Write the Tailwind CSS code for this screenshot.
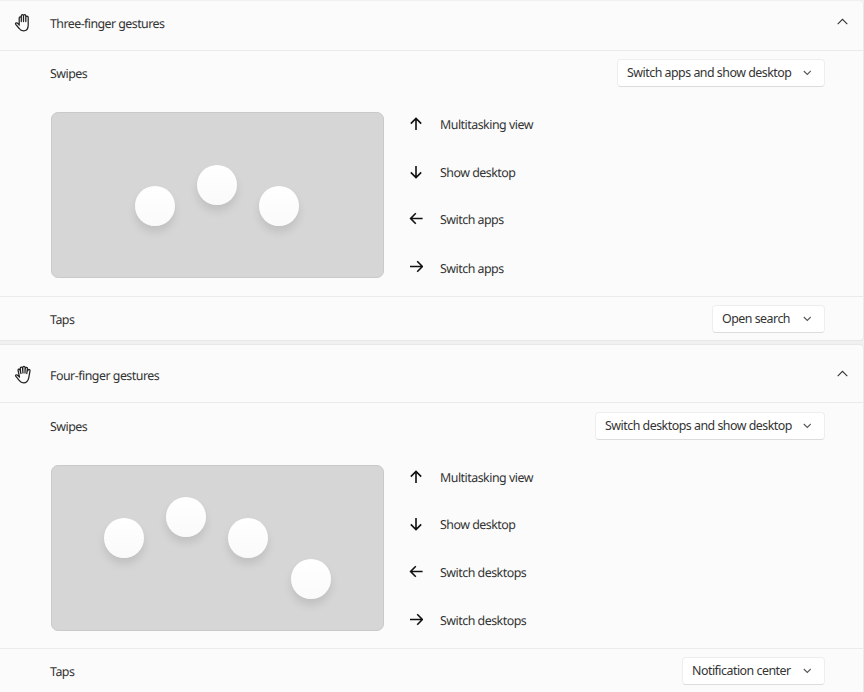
<!DOCTYPE html>
<html lang="en">
<head>
  <meta charset="UTF-8" />
  <meta name="viewport" content="width=device-width, initial-scale=1.0"/>
  <title>Touchpad gestures</title>
  <script src="https://cdn.jsdelivr.net/npm/@tailwindcss/browser@4"></script>
</head>
<body class="bg-[#f0f0f0] font-['Noto_Sans','Open_Sans',sans-serif] text-[12.4px] leading-4 tracking-[-0.5px] text-[#333] h-[692px] overflow-hidden [text-rendering:geometricPrecision]">

  <!-- Shared icons -->
  <svg class="hidden">
    <symbol id="up" viewBox="0 0 14 14"><path d="M7 13V1.6M1.8 6.6L7 1.4l5.2 5.2" fill="none" stroke="currentColor" stroke-width="1.6"/></symbol>
    <symbol id="down" viewBox="0 0 14 14"><path d="M7 1v11.4M1.8 7.4L7 12.6l5.2-5.2" fill="none" stroke="currentColor" stroke-width="1.6"/></symbol>
    <symbol id="left" viewBox="0 0 14 14"><path d="M13.6 6.5H1.8M6.8 1.3L1.6 6.5l5.200 5.200" fill="none" stroke="currentColor" stroke-width="1.6"/></symbol>
    <symbol id="right" viewBox="0 0 14 14"><path d="M1 6.500h12M8.200 1.300L13.400 6.500l-5.200 5.200" fill="none" stroke="currentColor" stroke-width="1.6"/></symbol>
    <symbol id="chev-up" viewBox="0 0 12 8"><path d="M1.700 6.200L6.500 1.400l4.800 4.800" fill="none" stroke="currentColor" stroke-width="1.1"/></symbol>
    <symbol id="chev-down" viewBox="0 0 8 6"><path d="M.8 1L4.300 4.500l3.500-3.500" fill="none" stroke="currentColor" stroke-width="1.100"/></symbol>
  </svg>

  <!-- Three-finger gestures -->
  <section class="mt-px w-[864px] h-[340px] bg-[#fbfbfb] border-r border-b border-[#e8e8e8] rounded-r">
    <div class="h-[50px] flex items-center pl-3.5 pr-[15px] pb-[5px] border-b border-[#ebebeb]">
      <svg class="w-[18px] h-5" viewBox="0 0 18 20" fill="none" stroke="#222" stroke-width="1.25" stroke-linecap="round" stroke-linejoin="round">
        <path d="M5.200 12.200V4.800c0-1.400 2.100-1.400 2.100 0V8.500M7.300 8V2.800c0-1.500 2.200-1.500 2.200 0V8.500M9.500 8V2.800c0-1.500 2.300-1.500 2.300 0V8.500M11.800 8.500V4.200c0-1.400 2.400-1.400 2.400 0v8c0 3.600-1.700 5.600-4.700 5.600-2.100 0-3.300-.8-4.300-2.300L1.700 11.300c-.6-.9.500-1.900 1.500-1.200l2 1.600"/>
      </svg>
      <span class="ml-[18px] mt-0.5 tracking-[-0.55px]">Three-finger gestures</span>
      <svg class="ml-auto mb-0.5 w-3 h-2 text-[#333]"><use href="#chev-up"/></svg>
    </div>

    <div class="h-[45px] flex items-center pl-[50px] pr-[38px] pb-0.5">
      <span class="mt-0.5">Swipes</span>
      <button type="button" class="ml-auto w-[208px] h-7 flex items-center justify-between pl-[9px] pr-[13px] bg-white border border-[#eeeeee] border-b-[#dcdcdc] rounded whitespace-nowrap">
        <span>Switch apps and show desktop</span>
        <svg class="w-2 h-1.5 text-[#555]"><use href="#chev-down"/></svg>
      </button>
    </div>

    <div class="h-[200px] flex pl-[50.5px] pt-4">
      <div class="relative w-[333px] h-[166px] bg-[#d6d6d6] border border-[#cacaca] rounded-[7px]">
        <div class="absolute left-[83px] top-[73px] size-10 rounded-full bg-linear-to-b from-white to-[#fafafa] shadow-[0_6px_8px_rgba(0,0,0,0.1)]"></div>
        <div class="absolute left-[145px] top-[52px] size-10 rounded-full bg-linear-to-b from-white to-[#fafafa] shadow-[0_6px_8px_rgba(0,0,0,0.1)]"></div>
        <div class="absolute left-[207.500px] top-[73px] size-10 rounded-full bg-linear-to-b from-white to-[#fafafa] shadow-[0_6px_8px_rgba(0,0,0,0.1)]"></div>
      </div>
      <ul class="ml-[25.5px] mt-[5px] flex flex-col gap-[31.7px]">
        <li class="flex items-center gap-[17px]"><svg class="size-3.5 mb-0.5 text-[#111]"><use href="#up"/></svg>Multitasking view</li>
        <li class="flex items-center gap-[17px]"><svg class="size-3.5 mb-0.5 text-[#111]"><use href="#down"/></svg>Show desktop</li>
        <li class="flex items-center gap-[17px]"><svg class="size-3.5 mb-0.5 text-[#111]"><use href="#left"/></svg>Switch apps</li>
        <li class="flex items-center gap-[17px]"><svg class="size-3.5 mb-[3px] text-[#111]"><use href="#right"/></svg>Switch apps</li>
      </ul>
    </div>

    <div class="h-11 flex items-center pl-[50px] pr-[38px] border-t border-[#ebebeb]">
      <span class="mt-0.5">Taps</span>
      <button type="button" class="ml-auto w-[113px] h-7 flex items-center justify-between pl-[9px] pr-[13px] bg-white border border-[#eeeeee] border-b-[#dcdcdc] rounded whitespace-nowrap">
        <span>Open search</span>
        <svg class="w-2 h-1.5 text-[#555]"><use href="#chev-down"/></svg>
      </button>
    </div>
  </section>

  <!-- Four-finger gestures -->
  <section class="mt-[3px] w-[864px] h-[360px] bg-[#fbfbfb] border-t border-r border-[#e8e8e8] rounded-r">
    <div class="h-[58px] flex items-center pl-3.5 pr-[15px] pt-0.5 border-b border-[#ebebeb]">
      <svg class="w-[18px] h-5" viewBox="0 0 18 20" fill="none" stroke="#222" stroke-width="1.25" stroke-linecap="round" stroke-linejoin="round">
        <path d="M5.5 12.2L4.100 5.500c-.4-1.500 1.400-1.900 1.900-.5L7 8.500M6.700 8L6.300 3.300c-.1-1.500 2-1.700 2.200-.2L9 8M8.800 6.500V2.500c0-1.600 2.300-1.600 2.300 0L11 8M11.100 5.500l.2-2.200c.2-1.500 2.300-1.200 2.100.2L12.800 8.500M13.200 6.500l.8-1.300c.6-1.300 2.400-.5 2 .7L14.800 12.600c-.7 3.500-2.400 5.300-5.200 5.300-2 0-3.100-.7-4.200-2.200L1.700 11.200c-.6-.9.500-1.800 1.500-1.100l2.300 1.900"/>
      </svg>
      <span class="ml-[18px] mt-0.5">Four-finger gestures</span>
      <svg class="ml-auto mb-0.5 w-3 h-2 text-[#333]"><use href="#chev-up"/></svg>
    </div>

    <div class="h-[45px] flex items-center pl-[50px] pr-[38px]">
      <span class="mt-0.5">Swipes</span>
      <button type="button" class="ml-auto w-[230px] h-7 flex items-center justify-between pl-[9px] pr-[13px] bg-white border border-[#eeeeee] border-b-[#dcdcdc] rounded whitespace-nowrap">
        <span>Switch desktops and show desktop</span>
        <svg class="w-2 h-1.5 text-[#555]"><use href="#chev-down"/></svg>
      </button>
    </div>

    <div class="h-[200px] flex pl-[50.5px] pt-[16.5px]">
      <div class="relative w-[333px] h-[166px] bg-[#d6d6d6] border border-[#cacaca] rounded-[7px]">
        <div class="absolute left-[52px] top-[52px] size-10 rounded-full bg-linear-to-b from-white to-[#fafafa] shadow-[0_6px_8px_rgba(0,0,0,0.1)]"></div>
        <div class="absolute left-[114px] top-[31px] size-10 rounded-full bg-linear-to-b from-white to-[#fafafa] shadow-[0_6px_8px_rgba(0,0,0,0.1)]"></div>
        <div class="absolute left-[176.500px] top-[52px] size-10 rounded-full bg-linear-to-b from-white to-[#fafafa] shadow-[0_6px_8px_rgba(0,0,0,0.1)]"></div>
        <div class="absolute left-[239px] top-[93px] size-10 rounded-full bg-linear-to-b from-white to-[#fafafa] shadow-[0_6px_8px_rgba(0,0,0,0.1)]"></div>
      </div>
      <ul class="ml-[25.5px] mt-[5px] flex flex-col gap-[31.7px]">
        <li class="flex items-center gap-[17px]"><svg class="size-3.5 mb-0.5 text-[#111]"><use href="#up"/></svg>Multitasking view</li>
        <li class="flex items-center gap-[17px]"><svg class="size-3.5 mb-0.5 text-[#111]"><use href="#down"/></svg>Show desktop</li>
        <li class="flex items-center gap-[17px]"><svg class="size-3.5 mb-0.5 text-[#111]"><use href="#left"/></svg>Switch desktops</li>
        <li class="flex items-center gap-[17px]"><svg class="size-3.5 mb-[3px] text-[#111]"><use href="#right"/></svg>Switch desktops</li>
      </ul>
    </div>

    <div class="h-11 flex items-center pl-[50px] pr-[38px] border-t border-[#ebebeb]">
      <span class="mt-0.5">Taps</span>
      <button type="button" class="ml-auto w-[143px] h-7 flex items-center justify-between pl-[9px] pr-[13px] bg-white border border-[#eeeeee] border-b-[#dcdcdc] rounded whitespace-nowrap">
        <span>Notification center</span>
        <svg class="w-2 h-1.5 text-[#555]"><use href="#chev-down"/></svg>
      </button>
    </div>
  </section>
</body>
</html>
